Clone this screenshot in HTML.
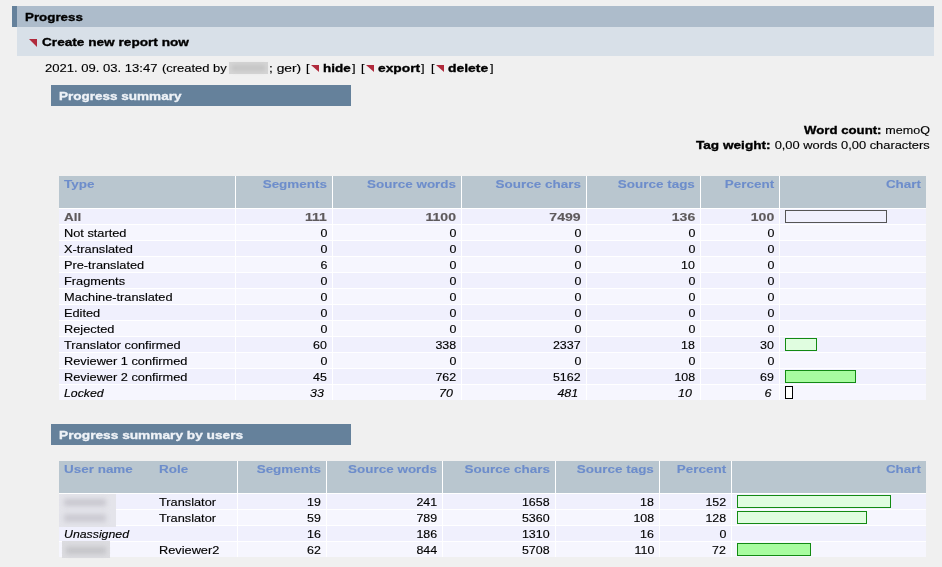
<!DOCTYPE html><html><head><meta charset="utf-8"><style>
*{margin:0;padding:0;box-sizing:border-box}
html,body{width:942px;height:567px;overflow:hidden;background:#f0f0f0}
body{position:relative;font-family:"Liberation Sans",sans-serif;font-size:11.5px;color:#000}
.a{position:absolute;white-space:nowrap}
.t{position:absolute;white-space:nowrap;line-height:16px;transform-origin:0 0;-webkit-text-stroke:0.15px}
.tr{position:absolute;white-space:nowrap;line-height:16px;transform-origin:100% 0;text-align:right;-webkit-text-stroke:0.15px}
.b{font-weight:bold;-webkit-text-stroke:0.35px}
.h{-webkit-text-stroke:0.1px}
.al{-webkit-text-stroke:0.15px}
.i{font-style:italic}
.tri{position:absolute;width:0;height:0;border-top:8px solid #b02a3c;border-left:8px solid transparent}
</style></head><body>
<div class="a" style="left:12px;top:6px;width:922px;height:21px;background:#adbccb;border-left:5px solid #65819b"></div>
<div class="t b" style="left:25px;top:9px;transform:scaleX(1.16)">Progress</div>
<div class="a" style="left:17px;top:27px;width:917px;height:29px;background:#d8e0e8;"></div>
<div class="tri" style="left:29px;top:39px"></div>
<div class="t b" style="left:41.5px;top:34px;transform:scaleX(1.185)">Create new report now</div>
<div class="t" style="left:45.3px;top:60px;transform:scaleX(1.135)">2021. 09. 03. 13:47</div>
<div class="t" style="left:162px;top:60px;transform:scaleX(1.125)">(created by</div>
<div class="a" style="left:229px;top:62px;width:39px;height:12px;background:#d5d5d5;"></div>
<div class="a" style="left:232px;top:65px;width:33px;height:6px;background:#c4c4c4;filter:blur(2px)"></div>
<div class="t" style="left:268.5px;top:60px;transform:scaleX(1.2)">; ger)</div>
<div class="t" style="left:306px;top:60px;transform:scaleX(1.11)">[</div>
<div class="tri" style="left:311px;top:65px;border-top-width:7px;border-left-width:8px"></div>
<div class="t b" style="left:323.4px;top:60px;transform:scaleX(1.17)">hide</div>
<div class="t" style="left:352px;top:60px;transform:scaleX(1.11)">]</div>
<div class="t" style="left:361px;top:60px;transform:scaleX(1.11)">[</div>
<div class="tri" style="left:366px;top:65px;border-top-width:7px;border-left-width:8px"></div>
<div class="t b" style="left:378px;top:60px;transform:scaleX(1.2)">export</div>
<div class="t" style="left:421.4px;top:60px;transform:scaleX(1.11)">]</div>
<div class="t" style="left:431px;top:60px;transform:scaleX(1.11)">[</div>
<div class="tri" style="left:436px;top:65px;border-top-width:7px;border-left-width:8px"></div>
<div class="t b" style="left:448px;top:60px;transform:scaleX(1.21)">delete</div>
<div class="t" style="left:490px;top:60px;transform:scaleX(1.11)">]</div>
<div class="a" style="left:51px;top:85px;width:300px;height:21px;background:#65819b;"></div>
<div class="t b" style="left:59.3px;top:88px;transform:scaleX(1.175);color:#eef2f7">Progress summary</div>
<div class="t b" style="left:803.7px;top:122px;transform:scaleX(1.148)">Word count:</div>
<div class="tr" style="right:12px;top:122px;transform:scaleX(1.089)">memoQ</div>
<div class="t b" style="left:696px;top:137px;transform:scaleX(1.183)">Tag weight:</div>
<div class="tr" style="right:12px;top:137px;transform:scaleX(1.118)">0,00 words 0,00 characters</div>
<div class="a" style="left:59px;top:176px;width:867px;height:224px;background:#fff;"></div>
<div class="a" style="left:59px;top:176px;width:176px;height:32px;background:#b9c6cf;"></div>
<div class="a" style="left:236px;top:176px;width:96px;height:32px;background:#b9c6cf;"></div>
<div class="a" style="left:333px;top:176px;width:128px;height:32px;background:#b9c6cf;"></div>
<div class="a" style="left:462px;top:176px;width:124px;height:32px;background:#b9c6cf;"></div>
<div class="a" style="left:587px;top:176px;width:113px;height:32px;background:#b9c6cf;"></div>
<div class="a" style="left:701px;top:176px;width:78px;height:32px;background:#b9c6cf;"></div>
<div class="a" style="left:780px;top:176px;width:146px;height:32px;background:#b9c6cf;"></div>
<div class="a" style="left:59px;top:209px;width:176px;height:15px;background:#f0f0fd;"></div>
<div class="a" style="left:236px;top:209px;width:96px;height:15px;background:#f0f0fd;"></div>
<div class="a" style="left:333px;top:209px;width:128px;height:15px;background:#f0f0fd;"></div>
<div class="a" style="left:462px;top:209px;width:124px;height:15px;background:#f0f0fd;"></div>
<div class="a" style="left:587px;top:209px;width:113px;height:15px;background:#f0f0fd;"></div>
<div class="a" style="left:701px;top:209px;width:78px;height:15px;background:#f0f0fd;"></div>
<div class="a" style="left:780px;top:209px;width:146px;height:15px;background:#f0f0fd;"></div>
<div class="a" style="left:59px;top:225px;width:176px;height:15px;background:#f6f6fe;"></div>
<div class="a" style="left:236px;top:225px;width:96px;height:15px;background:#f6f6fe;"></div>
<div class="a" style="left:333px;top:225px;width:128px;height:15px;background:#f6f6fe;"></div>
<div class="a" style="left:462px;top:225px;width:124px;height:15px;background:#f6f6fe;"></div>
<div class="a" style="left:587px;top:225px;width:113px;height:15px;background:#f6f6fe;"></div>
<div class="a" style="left:701px;top:225px;width:78px;height:15px;background:#f6f6fe;"></div>
<div class="a" style="left:780px;top:225px;width:146px;height:15px;background:#f6f6fe;"></div>
<div class="a" style="left:59px;top:241px;width:176px;height:15px;background:#f0f0fd;"></div>
<div class="a" style="left:236px;top:241px;width:96px;height:15px;background:#f0f0fd;"></div>
<div class="a" style="left:333px;top:241px;width:128px;height:15px;background:#f0f0fd;"></div>
<div class="a" style="left:462px;top:241px;width:124px;height:15px;background:#f0f0fd;"></div>
<div class="a" style="left:587px;top:241px;width:113px;height:15px;background:#f0f0fd;"></div>
<div class="a" style="left:701px;top:241px;width:78px;height:15px;background:#f0f0fd;"></div>
<div class="a" style="left:780px;top:241px;width:146px;height:15px;background:#f0f0fd;"></div>
<div class="a" style="left:59px;top:257px;width:176px;height:15px;background:#f6f6fe;"></div>
<div class="a" style="left:236px;top:257px;width:96px;height:15px;background:#f6f6fe;"></div>
<div class="a" style="left:333px;top:257px;width:128px;height:15px;background:#f6f6fe;"></div>
<div class="a" style="left:462px;top:257px;width:124px;height:15px;background:#f6f6fe;"></div>
<div class="a" style="left:587px;top:257px;width:113px;height:15px;background:#f6f6fe;"></div>
<div class="a" style="left:701px;top:257px;width:78px;height:15px;background:#f6f6fe;"></div>
<div class="a" style="left:780px;top:257px;width:146px;height:15px;background:#f6f6fe;"></div>
<div class="a" style="left:59px;top:273px;width:176px;height:15px;background:#f0f0fd;"></div>
<div class="a" style="left:236px;top:273px;width:96px;height:15px;background:#f0f0fd;"></div>
<div class="a" style="left:333px;top:273px;width:128px;height:15px;background:#f0f0fd;"></div>
<div class="a" style="left:462px;top:273px;width:124px;height:15px;background:#f0f0fd;"></div>
<div class="a" style="left:587px;top:273px;width:113px;height:15px;background:#f0f0fd;"></div>
<div class="a" style="left:701px;top:273px;width:78px;height:15px;background:#f0f0fd;"></div>
<div class="a" style="left:780px;top:273px;width:146px;height:15px;background:#f0f0fd;"></div>
<div class="a" style="left:59px;top:289px;width:176px;height:15px;background:#f6f6fe;"></div>
<div class="a" style="left:236px;top:289px;width:96px;height:15px;background:#f6f6fe;"></div>
<div class="a" style="left:333px;top:289px;width:128px;height:15px;background:#f6f6fe;"></div>
<div class="a" style="left:462px;top:289px;width:124px;height:15px;background:#f6f6fe;"></div>
<div class="a" style="left:587px;top:289px;width:113px;height:15px;background:#f6f6fe;"></div>
<div class="a" style="left:701px;top:289px;width:78px;height:15px;background:#f6f6fe;"></div>
<div class="a" style="left:780px;top:289px;width:146px;height:15px;background:#f6f6fe;"></div>
<div class="a" style="left:59px;top:305px;width:176px;height:15px;background:#f0f0fd;"></div>
<div class="a" style="left:236px;top:305px;width:96px;height:15px;background:#f0f0fd;"></div>
<div class="a" style="left:333px;top:305px;width:128px;height:15px;background:#f0f0fd;"></div>
<div class="a" style="left:462px;top:305px;width:124px;height:15px;background:#f0f0fd;"></div>
<div class="a" style="left:587px;top:305px;width:113px;height:15px;background:#f0f0fd;"></div>
<div class="a" style="left:701px;top:305px;width:78px;height:15px;background:#f0f0fd;"></div>
<div class="a" style="left:780px;top:305px;width:146px;height:15px;background:#f0f0fd;"></div>
<div class="a" style="left:59px;top:321px;width:176px;height:15px;background:#f6f6fe;"></div>
<div class="a" style="left:236px;top:321px;width:96px;height:15px;background:#f6f6fe;"></div>
<div class="a" style="left:333px;top:321px;width:128px;height:15px;background:#f6f6fe;"></div>
<div class="a" style="left:462px;top:321px;width:124px;height:15px;background:#f6f6fe;"></div>
<div class="a" style="left:587px;top:321px;width:113px;height:15px;background:#f6f6fe;"></div>
<div class="a" style="left:701px;top:321px;width:78px;height:15px;background:#f6f6fe;"></div>
<div class="a" style="left:780px;top:321px;width:146px;height:15px;background:#f6f6fe;"></div>
<div class="a" style="left:59px;top:337px;width:176px;height:15px;background:#f0f0fd;"></div>
<div class="a" style="left:236px;top:337px;width:96px;height:15px;background:#f0f0fd;"></div>
<div class="a" style="left:333px;top:337px;width:128px;height:15px;background:#f0f0fd;"></div>
<div class="a" style="left:462px;top:337px;width:124px;height:15px;background:#f0f0fd;"></div>
<div class="a" style="left:587px;top:337px;width:113px;height:15px;background:#f0f0fd;"></div>
<div class="a" style="left:701px;top:337px;width:78px;height:15px;background:#f0f0fd;"></div>
<div class="a" style="left:780px;top:337px;width:146px;height:15px;background:#f0f0fd;"></div>
<div class="a" style="left:59px;top:353px;width:176px;height:15px;background:#f6f6fe;"></div>
<div class="a" style="left:236px;top:353px;width:96px;height:15px;background:#f6f6fe;"></div>
<div class="a" style="left:333px;top:353px;width:128px;height:15px;background:#f6f6fe;"></div>
<div class="a" style="left:462px;top:353px;width:124px;height:15px;background:#f6f6fe;"></div>
<div class="a" style="left:587px;top:353px;width:113px;height:15px;background:#f6f6fe;"></div>
<div class="a" style="left:701px;top:353px;width:78px;height:15px;background:#f6f6fe;"></div>
<div class="a" style="left:780px;top:353px;width:146px;height:15px;background:#f6f6fe;"></div>
<div class="a" style="left:59px;top:369px;width:176px;height:15px;background:#f0f0fd;"></div>
<div class="a" style="left:236px;top:369px;width:96px;height:15px;background:#f0f0fd;"></div>
<div class="a" style="left:333px;top:369px;width:128px;height:15px;background:#f0f0fd;"></div>
<div class="a" style="left:462px;top:369px;width:124px;height:15px;background:#f0f0fd;"></div>
<div class="a" style="left:587px;top:369px;width:113px;height:15px;background:#f0f0fd;"></div>
<div class="a" style="left:701px;top:369px;width:78px;height:15px;background:#f0f0fd;"></div>
<div class="a" style="left:780px;top:369px;width:146px;height:15px;background:#f0f0fd;"></div>
<div class="a" style="left:59px;top:385px;width:176px;height:15px;background:#f6f6fe;"></div>
<div class="a" style="left:236px;top:385px;width:96px;height:15px;background:#f6f6fe;"></div>
<div class="a" style="left:333px;top:385px;width:128px;height:15px;background:#f6f6fe;"></div>
<div class="a" style="left:462px;top:385px;width:124px;height:15px;background:#f6f6fe;"></div>
<div class="a" style="left:587px;top:385px;width:113px;height:15px;background:#f6f6fe;"></div>
<div class="a" style="left:701px;top:385px;width:78px;height:15px;background:#f6f6fe;"></div>
<div class="a" style="left:780px;top:385px;width:146px;height:15px;background:#f6f6fe;"></div>
<div class="t b h" style="left:64px;top:176px;transform:scaleX(1.17);color:#6d8dcb">Type</div>
<div class="tr b h" style="right:615px;top:176px;transform:scaleX(1.17);color:#6d8dcb">Segments</div>
<div class="tr b h" style="right:486px;top:176px;transform:scaleX(1.17);color:#6d8dcb">Source words</div>
<div class="tr b h" style="right:361px;top:176px;transform:scaleX(1.17);color:#6d8dcb">Source chars</div>
<div class="tr b h" style="right:247px;top:176px;transform:scaleX(1.17);color:#6d8dcb">Source tags</div>
<div class="tr b h" style="right:168px;top:176px;transform:scaleX(1.17);color:#6d8dcb">Percent</div>
<div class="tr b h" style="right:21px;top:176px;transform:scaleX(1.17);color:#6d8dcb">Chart</div>
<div class="t b al" style="left:64px;top:209px;transform:scaleX(1.17);color:#5e5a5c">All</div>
<div class="tr b al" style="right:615px;top:209px;transform:scaleX(1.22);color:#5e5a5c">111</div>
<div class="tr b al" style="right:486px;top:209px;transform:scaleX(1.22);color:#5e5a5c">1100</div>
<div class="tr b al" style="right:361px;top:209px;transform:scaleX(1.22);color:#5e5a5c">7499</div>
<div class="tr b al" style="right:247px;top:209px;transform:scaleX(1.22);color:#5e5a5c">136</div>
<div class="tr b al" style="right:168px;top:209px;transform:scaleX(1.22);color:#5e5a5c">100</div>
<div class="a" style="left:785px;top:210px;width:102px;height:13px;border:1px solid #555;background:transparent"></div>
<div class="t" style="left:64px;top:225px;transform:scaleX(1.11)">Not started</div>
<div class="tr" style="right:615px;top:225px;transform:scaleX(1.08)">0</div>
<div class="tr" style="right:486px;top:225px;transform:scaleX(1.08)">0</div>
<div class="tr" style="right:361px;top:225px;transform:scaleX(1.08)">0</div>
<div class="tr" style="right:247px;top:225px;transform:scaleX(1.08)">0</div>
<div class="tr" style="right:168px;top:225px;transform:scaleX(1.08)">0</div>
<div class="t" style="left:64px;top:241px;transform:scaleX(1.11)">X-translated</div>
<div class="tr" style="right:615px;top:241px;transform:scaleX(1.08)">0</div>
<div class="tr" style="right:486px;top:241px;transform:scaleX(1.08)">0</div>
<div class="tr" style="right:361px;top:241px;transform:scaleX(1.08)">0</div>
<div class="tr" style="right:247px;top:241px;transform:scaleX(1.08)">0</div>
<div class="tr" style="right:168px;top:241px;transform:scaleX(1.08)">0</div>
<div class="t" style="left:64px;top:257px;transform:scaleX(1.11)">Pre-translated</div>
<div class="tr" style="right:615px;top:257px;transform:scaleX(1.08)">6</div>
<div class="tr" style="right:486px;top:257px;transform:scaleX(1.08)">0</div>
<div class="tr" style="right:361px;top:257px;transform:scaleX(1.08)">0</div>
<div class="tr" style="right:247px;top:257px;transform:scaleX(1.08)">10</div>
<div class="tr" style="right:168px;top:257px;transform:scaleX(1.08)">0</div>
<div class="t" style="left:64px;top:273px;transform:scaleX(1.11)">Fragments</div>
<div class="tr" style="right:615px;top:273px;transform:scaleX(1.08)">0</div>
<div class="tr" style="right:486px;top:273px;transform:scaleX(1.08)">0</div>
<div class="tr" style="right:361px;top:273px;transform:scaleX(1.08)">0</div>
<div class="tr" style="right:247px;top:273px;transform:scaleX(1.08)">0</div>
<div class="tr" style="right:168px;top:273px;transform:scaleX(1.08)">0</div>
<div class="t" style="left:64px;top:289px;transform:scaleX(1.11)">Machine-translated</div>
<div class="tr" style="right:615px;top:289px;transform:scaleX(1.08)">0</div>
<div class="tr" style="right:486px;top:289px;transform:scaleX(1.08)">0</div>
<div class="tr" style="right:361px;top:289px;transform:scaleX(1.08)">0</div>
<div class="tr" style="right:247px;top:289px;transform:scaleX(1.08)">0</div>
<div class="tr" style="right:168px;top:289px;transform:scaleX(1.08)">0</div>
<div class="t" style="left:64px;top:305px;transform:scaleX(1.11)">Edited</div>
<div class="tr" style="right:615px;top:305px;transform:scaleX(1.08)">0</div>
<div class="tr" style="right:486px;top:305px;transform:scaleX(1.08)">0</div>
<div class="tr" style="right:361px;top:305px;transform:scaleX(1.08)">0</div>
<div class="tr" style="right:247px;top:305px;transform:scaleX(1.08)">0</div>
<div class="tr" style="right:168px;top:305px;transform:scaleX(1.08)">0</div>
<div class="t" style="left:64px;top:321px;transform:scaleX(1.11)">Rejected</div>
<div class="tr" style="right:615px;top:321px;transform:scaleX(1.08)">0</div>
<div class="tr" style="right:486px;top:321px;transform:scaleX(1.08)">0</div>
<div class="tr" style="right:361px;top:321px;transform:scaleX(1.08)">0</div>
<div class="tr" style="right:247px;top:321px;transform:scaleX(1.08)">0</div>
<div class="tr" style="right:168px;top:321px;transform:scaleX(1.08)">0</div>
<div class="t" style="left:64px;top:337px;transform:scaleX(1.11)">Translator confirmed</div>
<div class="tr" style="right:615px;top:337px;transform:scaleX(1.08)">60</div>
<div class="tr" style="right:486px;top:337px;transform:scaleX(1.08)">338</div>
<div class="tr" style="right:361px;top:337px;transform:scaleX(1.08)">2337</div>
<div class="tr" style="right:247px;top:337px;transform:scaleX(1.08)">18</div>
<div class="tr" style="right:168px;top:337px;transform:scaleX(1.08)">30</div>
<div class="a" style="left:785px;top:338px;width:32px;height:13px;border:1px solid #138a13;background:#e0fde0"></div>
<div class="t" style="left:64px;top:353px;transform:scaleX(1.11)">Reviewer 1 confirmed</div>
<div class="tr" style="right:615px;top:353px;transform:scaleX(1.08)">0</div>
<div class="tr" style="right:486px;top:353px;transform:scaleX(1.08)">0</div>
<div class="tr" style="right:361px;top:353px;transform:scaleX(1.08)">0</div>
<div class="tr" style="right:247px;top:353px;transform:scaleX(1.08)">0</div>
<div class="tr" style="right:168px;top:353px;transform:scaleX(1.08)">0</div>
<div class="t" style="left:64px;top:369px;transform:scaleX(1.11)">Reviewer 2 confirmed</div>
<div class="tr" style="right:615px;top:369px;transform:scaleX(1.08)">45</div>
<div class="tr" style="right:486px;top:369px;transform:scaleX(1.08)">762</div>
<div class="tr" style="right:361px;top:369px;transform:scaleX(1.08)">5162</div>
<div class="tr" style="right:247px;top:369px;transform:scaleX(1.08)">108</div>
<div class="tr" style="right:168px;top:369px;transform:scaleX(1.08)">69</div>
<div class="a" style="left:785px;top:370px;width:71px;height:13px;border:1px solid #138a13;background:#a8fca0"></div>
<div class="t i" style="left:64px;top:385px;transform:scaleX(1.07)">Locked</div>
<div class="tr i" style="right:618px;top:385px;transform:scaleX(1.08)">33</div>
<div class="tr i" style="right:489px;top:385px;transform:scaleX(1.08)">70</div>
<div class="tr i" style="right:364px;top:385px;transform:scaleX(1.08)">481</div>
<div class="tr i" style="right:250px;top:385px;transform:scaleX(1.08)">10</div>
<div class="tr i" style="right:171px;top:385px;transform:scaleX(1.08)">6</div>
<div class="a" style="left:785px;top:386px;width:8px;height:13px;border:1px solid #000;background:#fff"></div>
<div class="a" style="left:51px;top:424px;width:300px;height:21px;background:#65819b;"></div>
<div class="t b" style="left:59.3px;top:427px;transform:scaleX(1.19);color:#eef2f7">Progress summary by users</div>
<div class="a" style="left:59px;top:461px;width:867px;height:96px;background:#fff;"></div>
<div class="a" style="left:59px;top:461px;width:95px;height:32px;background:#b9c6cf;"></div>
<div class="a" style="left:154px;top:461px;width:83px;height:32px;background:#b9c6cf;"></div>
<div class="a" style="left:238px;top:461px;width:88px;height:32px;background:#b9c6cf;"></div>
<div class="a" style="left:327px;top:461px;width:115px;height:32px;background:#b9c6cf;"></div>
<div class="a" style="left:443px;top:461px;width:112px;height:32px;background:#b9c6cf;"></div>
<div class="a" style="left:556px;top:461px;width:103px;height:32px;background:#b9c6cf;"></div>
<div class="a" style="left:660px;top:461px;width:71px;height:32px;background:#b9c6cf;"></div>
<div class="a" style="left:732px;top:461px;width:194px;height:32px;background:#b9c6cf;"></div>
<div class="a" style="left:59px;top:494px;width:95px;height:15px;background:#f0f0fd;"></div>
<div class="a" style="left:154px;top:494px;width:83px;height:15px;background:#f0f0fd;"></div>
<div class="a" style="left:238px;top:494px;width:88px;height:15px;background:#f0f0fd;"></div>
<div class="a" style="left:327px;top:494px;width:115px;height:15px;background:#f0f0fd;"></div>
<div class="a" style="left:443px;top:494px;width:112px;height:15px;background:#f0f0fd;"></div>
<div class="a" style="left:556px;top:494px;width:103px;height:15px;background:#f0f0fd;"></div>
<div class="a" style="left:660px;top:494px;width:71px;height:15px;background:#f0f0fd;"></div>
<div class="a" style="left:732px;top:494px;width:194px;height:15px;background:#f0f0fd;"></div>
<div class="a" style="left:59px;top:510px;width:95px;height:15px;background:#f6f6fe;"></div>
<div class="a" style="left:154px;top:510px;width:83px;height:15px;background:#f6f6fe;"></div>
<div class="a" style="left:238px;top:510px;width:88px;height:15px;background:#f6f6fe;"></div>
<div class="a" style="left:327px;top:510px;width:115px;height:15px;background:#f6f6fe;"></div>
<div class="a" style="left:443px;top:510px;width:112px;height:15px;background:#f6f6fe;"></div>
<div class="a" style="left:556px;top:510px;width:103px;height:15px;background:#f6f6fe;"></div>
<div class="a" style="left:660px;top:510px;width:71px;height:15px;background:#f6f6fe;"></div>
<div class="a" style="left:732px;top:510px;width:194px;height:15px;background:#f6f6fe;"></div>
<div class="a" style="left:59px;top:526px;width:95px;height:15px;background:#f0f0fd;"></div>
<div class="a" style="left:154px;top:526px;width:83px;height:15px;background:#f0f0fd;"></div>
<div class="a" style="left:238px;top:526px;width:88px;height:15px;background:#f0f0fd;"></div>
<div class="a" style="left:327px;top:526px;width:115px;height:15px;background:#f0f0fd;"></div>
<div class="a" style="left:443px;top:526px;width:112px;height:15px;background:#f0f0fd;"></div>
<div class="a" style="left:556px;top:526px;width:103px;height:15px;background:#f0f0fd;"></div>
<div class="a" style="left:660px;top:526px;width:71px;height:15px;background:#f0f0fd;"></div>
<div class="a" style="left:732px;top:526px;width:194px;height:15px;background:#f0f0fd;"></div>
<div class="a" style="left:59px;top:542px;width:95px;height:15px;background:#f6f6fe;"></div>
<div class="a" style="left:154px;top:542px;width:83px;height:15px;background:#f6f6fe;"></div>
<div class="a" style="left:238px;top:542px;width:88px;height:15px;background:#f6f6fe;"></div>
<div class="a" style="left:327px;top:542px;width:115px;height:15px;background:#f6f6fe;"></div>
<div class="a" style="left:443px;top:542px;width:112px;height:15px;background:#f6f6fe;"></div>
<div class="a" style="left:556px;top:542px;width:103px;height:15px;background:#f6f6fe;"></div>
<div class="a" style="left:660px;top:542px;width:71px;height:15px;background:#f6f6fe;"></div>
<div class="a" style="left:732px;top:542px;width:194px;height:15px;background:#f6f6fe;"></div>
<div class="t b h" style="left:64px;top:461px;transform:scaleX(1.17);color:#6d8dcb">User name</div>
<div class="t b h" style="left:159px;top:461px;transform:scaleX(1.17);color:#6d8dcb">Role</div>
<div class="tr b h" style="right:621px;top:461px;transform:scaleX(1.17);color:#6d8dcb">Segments</div>
<div class="tr b h" style="right:505px;top:461px;transform:scaleX(1.17);color:#6d8dcb">Source words</div>
<div class="tr b h" style="right:392px;top:461px;transform:scaleX(1.17);color:#6d8dcb">Source chars</div>
<div class="tr b h" style="right:288px;top:461px;transform:scaleX(1.17);color:#6d8dcb">Source tags</div>
<div class="tr b h" style="right:216px;top:461px;transform:scaleX(1.17);color:#6d8dcb">Percent</div>
<div class="tr b h" style="right:21px;top:461px;transform:scaleX(1.17);color:#6d8dcb">Chart</div>
<div class="t" style="left:159px;top:494px;transform:scaleX(1.11)">Translator</div>
<div class="tr" style="right:621px;top:494px;transform:scaleX(1.08)">19</div>
<div class="tr" style="right:505px;top:494px;transform:scaleX(1.08)">241</div>
<div class="tr" style="right:392px;top:494px;transform:scaleX(1.08)">1658</div>
<div class="tr" style="right:288px;top:494px;transform:scaleX(1.08)">18</div>
<div class="tr" style="right:216px;top:494px;transform:scaleX(1.08)">152</div>
<div class="a" style="left:737px;top:495px;width:154px;height:13px;border:1px solid #138a13;background:#e0fde0"></div>
<div class="t" style="left:159px;top:510px;transform:scaleX(1.11)">Translator</div>
<div class="tr" style="right:621px;top:510px;transform:scaleX(1.08)">59</div>
<div class="tr" style="right:505px;top:510px;transform:scaleX(1.08)">789</div>
<div class="tr" style="right:392px;top:510px;transform:scaleX(1.08)">5360</div>
<div class="tr" style="right:288px;top:510px;transform:scaleX(1.08)">108</div>
<div class="tr" style="right:216px;top:510px;transform:scaleX(1.08)">128</div>
<div class="a" style="left:737px;top:511px;width:130px;height:13px;border:1px solid #138a13;background:#e0fde0"></div>
<div class="t i" style="left:64px;top:526px;transform:scaleX(1.07)">Unassigned</div>
<div class="tr" style="right:621px;top:526px;transform:scaleX(1.08)">16</div>
<div class="tr" style="right:505px;top:526px;transform:scaleX(1.08)">186</div>
<div class="tr" style="right:392px;top:526px;transform:scaleX(1.08)">1310</div>
<div class="tr" style="right:288px;top:526px;transform:scaleX(1.08)">16</div>
<div class="tr" style="right:216px;top:526px;transform:scaleX(1.08)">0</div>
<div class="t" style="left:159px;top:542px;transform:scaleX(1.11)">Reviewer2</div>
<div class="tr" style="right:621px;top:542px;transform:scaleX(1.08)">62</div>
<div class="tr" style="right:505px;top:542px;transform:scaleX(1.08)">844</div>
<div class="tr" style="right:392px;top:542px;transform:scaleX(1.08)">5708</div>
<div class="tr" style="right:288px;top:542px;transform:scaleX(1.08)">110</div>
<div class="tr" style="right:216px;top:542px;transform:scaleX(1.08)">72</div>
<div class="a" style="left:737px;top:543px;width:74px;height:13px;border:1px solid #138a13;background:#a8fca0"></div>
<div class="a" style="left:59px;top:494px;width:57px;height:33px;background:#e4e4ea;"></div>
<div class="a" style="left:64px;top:499px;width:42px;height:7px;background:#c8c7cf;filter:blur(2.5px)"></div>
<div class="a" style="left:64px;top:514px;width:42px;height:8px;background:#cbcad2;filter:blur(2.5px)"></div>
<div class="a" style="left:62px;top:541px;width:48px;height:17px;background:#dcdce0;"></div>
<div class="a" style="left:66px;top:547px;width:40px;height:7px;background:#c4c4c8;filter:blur(2.5px)"></div>
</body></html>
